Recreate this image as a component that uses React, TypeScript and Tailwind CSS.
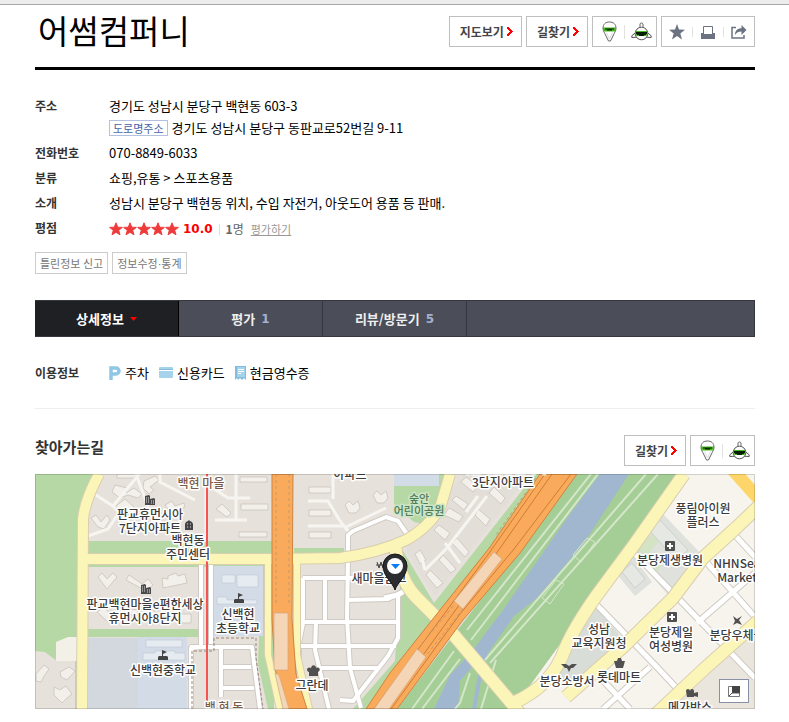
import { useState } from 'react';
import type { ReactNode } from 'react';
import clsx from 'clsx';

const tabs = [
  { id: 'detail', label: '상세정보' },
  { id: 'rating', label: '평가', count: 1 },
  { id: 'review', label: '리뷰/방문기', count: 5 },
];

function ArrowButton({ children }: { children: ReactNode }) {
  return (
    <button className="flex h-[31px] items-center gap-[3px] whitespace-nowrap border border-[#bfbfbf] bg-white pr-2 pl-[10px] text-xs font-bold text-[#444]">
      {children}
      <svg width="6" height="9" viewBox="0 0 6 9" shapeRendering="crispEdges">
        <path d="M0 0h2v1h1v1h1v1h1v1h1v1H5v1H4v1H3v1H2v1H0V7h1V6h1V5h1V4H2V3H1V2H0z" fill="#f00" />
      </svg>
    </button>
  );
}

function ViewButtons() {
  return (
    <div className="flex h-[31px] items-center border border-[#bfbfbf] bg-white pr-1 pl-[5px]">
      <button aria-label="거리뷰" className="flex w-[22px] items-center justify-center">
        <svg width="15" height="21" viewBox="0 0 15 21">
          <path d="M1 7.5C1 3 3.6 1 7.5 1S14 3 14 7.5c0 1.800-.9 3-1.800 5L8.500 20h-2L2.800 12.500C1.900 10.500 1 9.300 1 7.500z" fill="#fff" stroke="#666" />
          <path d="M1 6.500h13v2.300c-.3 1-1 1.700-2 1.700H3c-1 0-1.700-.7-2-1.700z" fill="#44b51d" />
          <path d="M3 7.500h9v1H10v1H5v-1H3z" fill="#082b05" />
          <path d="M4.500 11.500 7.500 18l3-6.500" fill="none" stroke="#ddd" />
        </svg>
      </button>
      <span className="ml-1 h-[14px] w-px bg-[#e2e2e2]" />
      <button aria-label="항공뷰" className="ml-[5px] flex w-[22px] items-center justify-center">
        <svg width="21" height="19" viewBox="0 0 21 19">
          <path d="M6 9.500.8 13.800v1.700l5.500-.3M15 9.500l5.200 4.300v1.700l-5.500-.3" fill="#fff" stroke="#555" />
          <path d="M9 5V2c0-1.300 3-1.300 3 0v3" fill="#fff" stroke="#666" />
          <circle cx="10.500" cy="11.500" r="6.300" fill="#fff" stroke="#555" />
          <path d="M5 9h11l.8 2-1.300 3H5.500L4.200 11z" fill="#48b721" />
          <path d="M5 10h11v2h-1v1h-2v1H8v-1H6v-1H5z" fill="#061d05" />
        </svg>
      </button>
    </div>
  );
}

function ShareButtons() {
  return (
    <div className="flex h-[31px] items-center border border-[#bfbfbf] bg-white px-[7px]">
      <button aria-label="즐겨찾기" className="flex w-4 justify-center">
        <svg width="16" height="16" viewBox="0 0 16 16">
          <path d="m8 0 2 5.500 6 .3-4.700 3.600L13 15.500l-5-3.600-5 3.600 1.700-6.100L0 5.800l6-.3z" fill="#6b7382" />
        </svg>
      </button>
      <span className="mx-[7px] h-[10px] w-px bg-[#e2e2e2]" />
      <button aria-label="인쇄" className="flex w-4 justify-center">
        <svg width="14" height="14" viewBox="0 0 14 14">
          <path d="M0 8h2v-1h10v1h2v6H0z" fill="#6b7382" />
          <path d="M2.500 9.500v-8h9v8z" fill="#fff" stroke="#6b7382" />
        </svg>
      </button>
      <span className="mx-[7px] h-[10px] w-px bg-[#e2e2e2]" />
      <button aria-label="공유" className="flex w-4 justify-center">
        <svg width="16" height="14" viewBox="0 0 16 14">
          <path d="M5 2.500H1v10.500h12V10" fill="none" stroke="#6b7382" strokeWidth="1.500" />
          <path d="M4 10c0-4.500 2.500-6.800 6.500-6.800V0L15.500 5l-5 5V6.500C7.500 6.500 5.500 7.500 4 10z" fill="#6b7382" />
        </svg>
      </button>
    </div>
  );
}

function Stars() {
  return (
    <svg width="70" height="14" viewBox="0 0 70 14" role="img" aria-label="별점 5점">
      {[0, 14, 28, 42, 56].map((x) => (
        <path
          key={x}
          transform={`translate(${x})`}
          d="m7 .8 1.700 4.400 4.700.2-3.700 2.900 1.300 4.500L7 10.300l-4 2.500 1.300-4.500L.6 5.400l4.700-.2z"
          fill="#ee3a3a"
          stroke="#f03b3b"
        />
      ))}
    </svg>
  );
}

const lots = [
  'M98 577l4-4 5 6 6-6 4 4-10 12z',
  'M126 580l3-5 13 9 6-5 5 6-7 6z',
  'M162 578l6 1 0-3 8-3 2 3 7-2 2 9-24 5z',
  'M97 612l7-5 8 9-4 6zM118 607l20 3-1 6-20-4zM143 617l10-7 5 5-9 7zM181 614h10v9h-10z',
  'M115 485l12 3-1 5 8-5 8 6-4 4-10-3-8 3-8-6z',
  'M116 506l9-7 9 8-5 5-5-4-5 5zM91 518l5-3 5 7 6-7 3 5-6 9-6-2z',
  'M144 481l11-5 4 4-9 7 4 3-5 4-6-6zM165 505l7-4 3 5 9-3 1 4-14 6z',
  'M117 474h19v4h-19zM177 478l14-3v5l-12 4z',
  'M240 477h27v5h-27zM241 504h27v6h-27zM239 532h28v5h-28zM216 509l6-5 3 3 6 6-4 4z',
  'M309 487h22v6h-22zM309 510h22v6h-22zM309 532h22v6h-22z',
  'M345 505l4-4 4 4 5-4 2 7-4 5h-7zM373 495l4-4 4 4 5-4 2 7-4 5h-7z',
  'M452 500l4-4 12 8-4 6zM444 515l5-7 14 8-4 6zM434 530l5-5 11 8-5 7zM475 515l3-6 12 10-4 7zM489 493l5-6 11 11-4 6zM452 543l5-5 12 14-4 5zM439 560l4-5 13 14-5 4zM426 575l4-5 13 13-6 5zM415 554l5-4 6 10-6 4zM461 482l5-5 12 9-5 6z',
  'M36 674l8-9 5 4-5 7-3 6-5-1zM60 672l9-5 6 4-8 9-6-3zM54 687l6 3 6-4 6 8-6 5-4 4-8-8z',
];

function ApartmentIcon({ x, y }: { x: number; y: number }) {
  return (
    <g transform={`translate(${x} ${y})`}>
      <path d="M0 1 4 0l1 1v9H0zM5 4l4-1 1 1v6H5z" fill="#4a4a4a" />
      <path d="M1 3h1M3 3h1M1 5h1M3 5h1M1 7h1M3 7h1M6 6h1M8 6h1M6 8h1M8 8h1" stroke="#ddd" />
    </g>
  );
}

function HospitalIcon({ x, y }: { x: number; y: number }) {
  return (
    <g transform={`translate(${x} ${y})`}>
      <rect width="10" height="10" rx="1" fill="#505050" />
      <path d="M5 2v6M2 5h6" stroke="#fff" strokeWidth="2" />
    </g>
  );
}

function SchoolIcon({ x, y }: { x: number; y: number }) {
  return (
    <path
      transform={`translate(${x} ${y})`}
      d="M4 0v6H1l-1 1v3h10V7L9 6H5V4l4-2z"
      fill="#444"
    />
  );
}

const places: { x: number; y: number; lines: string[]; tone?: string }[] = [
  { x: 201, y: 488, lines: ['백현 마을'], tone: '#7d5a45' },
  { x: 150, y: 519, lines: ['판교휴먼시아', '7단지아파트'] },
  { x: 188, y: 545, lines: ['백현동', '주민센터'] },
  { x: 145, y: 609, lines: ['판교백현마을e편한세상', '휴먼시아8단지'] },
  { x: 163, y: 675, lines: ['신백현중학교'] },
  { x: 238, y: 619, lines: ['신백현', '초등학교'] },
  { x: 224, y: 712, lines: ['백 현 동'], tone: '#7d5a45' },
  { x: 350, y: 479, lines: ['아파트'] },
  { x: 379, y: 583, lines: ['새마을금고'] },
  { x: 312, y: 690, lines: ['그란데'] },
  { x: 503, y: 473, lines: ['백현마을휴먼시아', '3단지아파트'] },
  { x: 703, y: 513, lines: ['풍림아이원', '플러스'] },
  { x: 670, y: 565, lines: ['분당제생병원'] },
  { x: 599, y: 634, lines: ['성남', '교육지원청'] },
  { x: 671, y: 637, lines: ['분당제일', '여성병원'] },
  { x: 737, y: 640, lines: ['분당우체국'] },
  { x: 567, y: 686, lines: ['분당소방서'] },
  { x: 619, y: 682, lines: ['롯데마트'] },
  { x: 690, y: 712, lines: ['메가박스'] },
  { x: 746, y: 568, lines: ['NHNSearch', 'Marketing'] },
];

function LocationMap() {
  return (
    <svg
      className="block h-[235px] w-full"
      viewBox="35 474 720 235"
      preserveAspectRatio="xMidYMid slice"
      role="img"
      aria-label="어썸컴퍼니 위치 지도"
    >
      <path d="M35 474h720v235H35z" fill="#e6e1da" />

      {/* parks and verges */}
      <path d="M35 474h60l-15 30-2 205h-3V661H57l-12-9-10-1z" fill="#b5d8a4" />
      <path d="M56 642l12-5h10v24H56z" fill="#f3f0e8" />
      <path d="M88 541h185v26H88zM88 629h113v8H88zM294 548h50v6h-50zM262 560h12v149h-6l-10-45zM294 578h8v131h-8z" fill="#b5d8a4" />
      <path d="M394 474h52l-6 30-16 20-10-2-20-18z" fill="#b5d8a4" />
      <path d="M394 474h45v12h-45z" fill="#d2dce7" />
      <path d="M545 474h-10L434 603l-31-52-5 60-3 50-42 48h20z" fill="#b5d8a4" />
      <path d="M405 547l53-66 6-7h66l-95 122-15-22z" fill="#e3dfd8" />
      <path d="M577 474h107L513 709H397z" fill="#a5cd96" />

      {/* school grounds */}
      <path d="M88 638h98v71H88z" fill="#d2d8dd" />
      <path d="M138 637h49v72h-49zM214 566h49v70h-49z" fill="#d2dbe6" />
      <path d="M146 640h36v7h-36zM143 653h12v-2h20v2h10v7h-42zM222 575h13v8h-13zM237 575h21v12h-21zM217 597h10v3h30v4h-40z" fill="#e6ebf2" stroke="#c0c8d0" strokeWidth=".6" />

      {/* river */}
      <path d="M600 474 570 514l-37 53-30 43-30 40-23 25-16 34h24l2-28 12-14h12l4-14 26-37 23-18 47-55 45-69z" fill="#a1b7d0" />
      <path d="m482 664-8 45" stroke="#a1b7d0" strokeWidth="4" />
      <g fill="none" stroke="#d4e7c9" strokeWidth="2">
        <path d="M591 474 467 630M598 474 471 640M454 651l-42 58M460 659l-38 50M658 474 490 663M646 474 485 660M470 673l-10 30-5 6M496 660l-15 49" />
        <path d="M542 598l14-18 8 4-14 20zM573 555l14-17 8 4-14 20z" strokeWidth="1" />
      </g>

      {/* eastern district */}
      <path d="M684 474h71v235H513z" fill="#f6f4ed" />
      <path d="M594 605l31 36-55 45h-33l33-43z" fill="#d9ddd8" />
      <path d="M662 513l43 45-36 38-39-45z" fill="#dfe1dc" />
      <path d="M635 549l17-15 7 7-13 15zM642 563l14-11 9 9-9 12z" fill="#d3e3c4" />
      <path d="M615 572l17-17 20 27-17 14z" fill="#dfe1dd" />
      <path d="M657 517l31 33-12 10-28-31zM622 572l10-9 13 16-10 9z" fill="#e6e8e4" stroke="#cdd0cc" />
      <path d="M755 625v84h-88z" fill="#ebe6dd" />

      {lots.map((d) => (
        <path key={d} d={d} fill="#f3f0eb" stroke="#c9c3bb" strokeWidth=".8" />
      ))}

      {/* small streets, outline first */}
      {['#cfcac3', '#fff'].map((color, i) => (
        <g key={color} fill="none" stroke={color} strokeWidth={i ? 5 : 7} strokeLinejoin="round">
          <path d="M632 551 677 597l78 81M595 603l60 62 28 30M697 623l58-50M707 563l48 54M733 533l22 24M593 670l37 39M603 709l47-42" />
          <path d="M303 578h45l17-1h25M303 578v45l-4 20v66M303 622h95M296 646h100M318 668h60M325 580v42M348 558l-1 60 3 50 11 40M348 600l40-1 12-6M316 622l-1 28 9 38 5 21M348 555v-20l5-4 33-14 12 4 14 20M398 593v45l-10 18-35 45-13-1M325 646" strokeWidth={i ? 4 : 6} />
          <path d="M201 565v82l-10 1v61M211 565v79M190 647h62l8 62M221 647v50M221 667h30M221 688h33" strokeWidth={i ? 4 : 6} />
          <path d="m384 598 14-3 12-8" />
        </g>
      ))}
      <g fill="none" stroke="#f7f5f1" strokeWidth="3">
        <path d="M88 490l25 16 28-34M113 506l25 25M88 536l20-7 10-15M136 474l14 38 25 26M160 474v8l35 18M206 476v63M236 474v45M213 488l15 10h22M215 520h32M308 501h20l12 20 8 10M308 526h36M333 474v25M346 527l40-19M425 570l22-22 40-52M466 512l12-16M425 570l-4-15M445 543l15 20" />
      </g>

      {/* yellow avenues */}
      {['#d9ceb0', '#fbf5b8'].map((color, i) => (
        <g key={color} fill="none" stroke={color} strokeWidth={i ? 10 : 12} strokeLinejoin="round">
          <path d="M99 474q-14 26-16 45l-1 190M86 559h190l64-1q38-5 66-18 25-14 35-35l9-31" />
          <path d="M268 560v95l12 54M297 560v95l12 54" strokeWidth={i ? 6 : 8} />
          <path d="M395 545q4 35 22 53l36 36 61 72 5 7M513 703q39-17 52-54 10-23 32-54l37-50 50-71M566 697l57-50 50-49 30-40 34-31 22-21M655 715l48-45 55-49" strokeWidth={i ? 12 : 14} />
        </g>
      ))}
      <path d="m733 470 25 28" stroke="#fdd568" strokeWidth="13" />

      {/* expressways */}
      <path d="M272 474h21l-1 145 4 55 11 35h-20l-12-40-3-50z" fill="#f9aa5b" stroke="#cf843e" />
      <path d="M276 474v130M289 474v130" stroke="#c39a71" strokeDasharray="3 3" />
      <path d="M274 613h14v57h-14zM275 673l4 2 10 34h-6z" fill="#f4d6b7" stroke="#d4a780" strokeWidth=".7" />
      <path d="M540 474h37l-57 79-57 67-66 89h-31l24-36 100-126z" fill="#f9aa5b" stroke="#cf843e" />
      <path d="M552 474 491 561 384 709M571 474l-57 75-54 65-69 95M545 474 487 556 374 709" fill="none" stroke="#cf7c36" />
      <path d="M453 606 417 650M463 609l-38 48M536 478l-40 57" stroke="#c39a71" strokeDasharray="3 3" />
      <path d="M494 552l8 7-39 50-9-8zM417 649l9 8-37 52h-15z" fill="#f4d6b7" stroke="#d4a780" strokeWidth=".7" />

      <path d="M207 474v235" stroke="#f55454" strokeWidth="2" />
      <path d="M192 709v-58h22v-13h42v20l7 51" fill="none" stroke="#9c8577" strokeDasharray="3 2" />

      <ApartmentIcon x={145} y={495} />
      <ApartmentIcon x={141} y={584} />
      <path d="M185 530v-6l1-2 2-1 1-1 1 1 2 1 1 2v6h1H184z" fill="#444" />
      <path d="M187 524h1M190 524h1M187 527h1M190 527h1" stroke="#ddd" />
      <SchoolIcon x={158} y={650} />
      <SchoolIcon x={234} y={593} />
      <HospitalIcon x={665} y={541} />
      <HospitalIcon x={667} y={612} />
      <path d="M309 676v-4c-4-2-1-6 2-4 1-4 5-3 5 0 4-2 5 3 2 4v4z" fill="#505050" />
      <path d="M614 661h3l1-3h3l1 3h3l-2 7h-7z" fill="#505050" />
      <path d="M561 664h5l3 2 3-2h5l-4 4h-2l-2 4-2-4h-2z" fill="#505050" />
      <path d="M733 616l4 3 5-3-3 4 3 5-5-2-4 2 2-4z" fill="#505050" />
      <path d="M686 691a2 2 0 1 1 4 0 2 2 0 1 1 4 0v2l4-1v5l-4-1v1h-7z" fill="#505050" />
      <path d="m377 562 2 6 2-6 2 6 2-6M376 565h10" fill="none" stroke="#444" />

      <g
        fontFamily="'Noto Sans CJK KR', sans-serif"
        fontSize="12"
        fontWeight="500"
        textAnchor="middle"
        stroke="#fff"
        strokeWidth="3"
        strokeLinejoin="round"
        paintOrder="stroke"
      >
        {places.map((p) => (
          <text key={p.lines[0]} x={p.x} y={p.y} fill={p.tone ?? '#3c3c3c'}>
            {p.lines.map((line, i) => (
              <tspan key={line} x={p.x} dy={i ? 14 : 0}>
                {line}
              </tspan>
            ))}
          </text>
        ))}
        <text x="419" y="503" fontSize="11" fill="#4d7c59" stroke="#cfe5c5">
          숲안
          <tspan x="419" dy="12">어린이공원</tspan>
        </text>
      </g>

      <path d="M395 590c-2-7-12-14-12-24a12 12 0 0 1 24 0c0 10-10 17-12 24z" fill="#2b2d30" stroke="#151515" />
      <circle cx="395" cy="566" r="8" fill="#fff" />
      <path d="M391 564h9l-4.500 5z" fill="#087df5" />
      <path d="M35.500 474.500h719v234h-719z" fill="none" stroke="#000" strokeOpacity=".15" />
    </svg>
  );
}

export default function App() {
  const [active, setActive] = useState('detail');

  return (
    <div className="bg-white pb-[13px] font-['Noto_Sans_CJK_KR',sans-serif] text-[13px] leading-5 text-black">
      <div className="h-[5px] border-b border-[#a8a8a8] bg-[#ececec]" />
      <main className="pr-[34px] pl-[35px]">
        <header className="flex h-[65px] items-start justify-between border-b-[3px] border-black">
          <h1 className="pl-[3px] text-[33px] leading-[50px] font-normal whitespace-nowrap">어썸컴퍼니</h1>
          <div className="flex gap-1 pt-[11px]">
            <ArrowButton>지도보기</ArrowButton>
            <ArrowButton>길찾기</ArrowButton>
            <ViewButtons />
            <ShareButtons />
          </div>
        </header>

        <dl className="mt-[26px] grid grid-cols-[74px_1fr] gap-y-[5px]">
          <dt className="text-xs leading-5 font-bold text-[#333]">주소</dt>
          <dd>
            <p>경기도 성남시 분당구 백현동 603-3</p>
            <p className="mt-[2px] flex items-center gap-1">
              <span className="border border-[#b4c0e0] px-[3px] text-[11px] leading-[14px] text-[#4663a8]">도로명주소</span>
              경기도 성남시 분당구 동판교로52번길 9-11
            </p>
          </dd>
          <dt className="text-xs leading-5 font-bold text-[#333]">전화번호</dt>
          <dd>070-8849-6033</dd>
          <dt className="text-xs leading-5 font-bold text-[#333]">분류</dt>
          <dd>쇼핑,유통 &gt; 스포츠용품</dd>
          <dt className="text-xs leading-5 font-bold text-[#333]">소개</dt>
          <dd>성남시 분당구 백현동 위치, 수입 자전거, 아웃도어 용품 등 판매.</dd>
          <dt className="text-xs leading-5 font-bold text-[#333]">평점</dt>
          <dd className="flex items-center pt-px">
            <Stars />
            <strong className="ml-1 font-['DejaVu_Sans',sans-serif] text-xs text-[#f00]">10.0</strong>
            <span className="mx-[6px] h-[11px] w-px bg-[#ddd]" />
            <span className="text-xs text-[#666]">
              <b>1</b>명
            </span>
            <a href="#rating" className="ml-[7px] text-[11px] text-[#999] underline">
              평가하기
            </a>
          </dd>
        </dl>

        <div className="mt-[13px] flex gap-1">
          <button className="h-[22px] border border-[#ccc] px-1 text-[11px] leading-5 text-[#777]">틀린정보 신고</button>
          <button className="h-[22px] border border-[#ccc] px-1 text-[11px] leading-5 text-[#777]">
            정보수정<span className="font-['Liberation_Sans',sans-serif]">·</span>통계
          </button>
        </div>

        <nav className="mt-[26px] flex h-[37px] border-y border-r border-[#343740] bg-[#4b4d58]">
          {tabs.map((tab) => (
            <button
              key={tab.id}
              onClick={() => setActive(tab.id)}
              className={clsx(
                'flex w-36 items-center justify-center gap-[6px] border-r font-bold',
                active === tab.id ? 'border-black bg-[#1f2024] text-white' : 'border-[#343740] text-[#eee]'
              )}
            >
              {tab.label}
              {tab.count && <span className="font-['DejaVu_Sans',sans-serif] text-xs text-[#a3b1cf]">{tab.count}</span>}
              {active === tab.id && (
                <svg width="7" height="4" viewBox="0 0 7 4">
                  <path d="M0 0h7L3.500 4z" fill="#f00" />
                </svg>
              )}
            </button>
          ))}
        </nav>

        <section className="mt-[26px] flex h-[46px] border-b border-[#eee]">
          <h2 className="w-[74px] text-xs leading-5 font-bold text-[#333]">이용정보</h2>
          <ul className="flex h-5 gap-[10px]">
            <li className="flex items-center gap-1">
              <svg width="12" height="14" viewBox="0 0 12 14">
                <path d="M2 14V2h5a2.700 2.700 0 0 1 0 6H2" fill="none" stroke="#8fc6e4" strokeWidth="3.500" />
              </svg>
              주차
            </li>
            <li className="flex items-center gap-1">
              <svg width="14" height="12" viewBox="0 0 14 12">
                <rect width="14" height="11" rx="1" fill="#a5d3ec" />
                <path d="M0 3.500h14" stroke="#fff" />
                <path d="M0 2.500h14" stroke="#82b9d6" />
              </svg>
              신용카드
            </li>
            <li className="flex items-center gap-1">
              <svg width="11" height="14" viewBox="0 0 11 14">
                <path d="M0 0h11v14l-2-2-2 2-2-2-2 2-1-2-2 2z" fill="#82bcdc" />
                <path d="M2 1h8v10H2z" fill="#a5d3ec" />
                <path d="M3 3.500h6M3 5.500h6M3 7.500h3" stroke="#fff" />
              </svg>
              현금영수증
            </li>
          </ul>
        </section>

        <section>
          <div className="flex h-[65px] items-start justify-between pt-[26px]">
            <h2 className="text-[15px] leading-6 font-bold text-[#333]">찾아가는길</h2>
            <div className="flex gap-1">
              <ArrowButton>길찾기</ArrowButton>
              <ViewButtons />
            </div>
          </div>
          <div className="relative">
            <LocationMap />
            <button
              aria-label="지도 크게 보기"
              className="absolute right-[6px] bottom-[6px] flex h-6 w-[30px] items-center justify-center border border-[#8790a4] bg-white"
            >
              <svg width="12" height="11" viewBox="0 0 12 11">
                <path d="M.5.5h11v10H.5z" fill="#fff" stroke="#777" />
                <path d="M4 0h8v7H4z" fill="#444" />
                <path d="M1 10l3-3h8" fill="none" stroke="#555" />
              </svg>
            </button>
          </div>
        </section>
      </main>
    </div>
  );
}
